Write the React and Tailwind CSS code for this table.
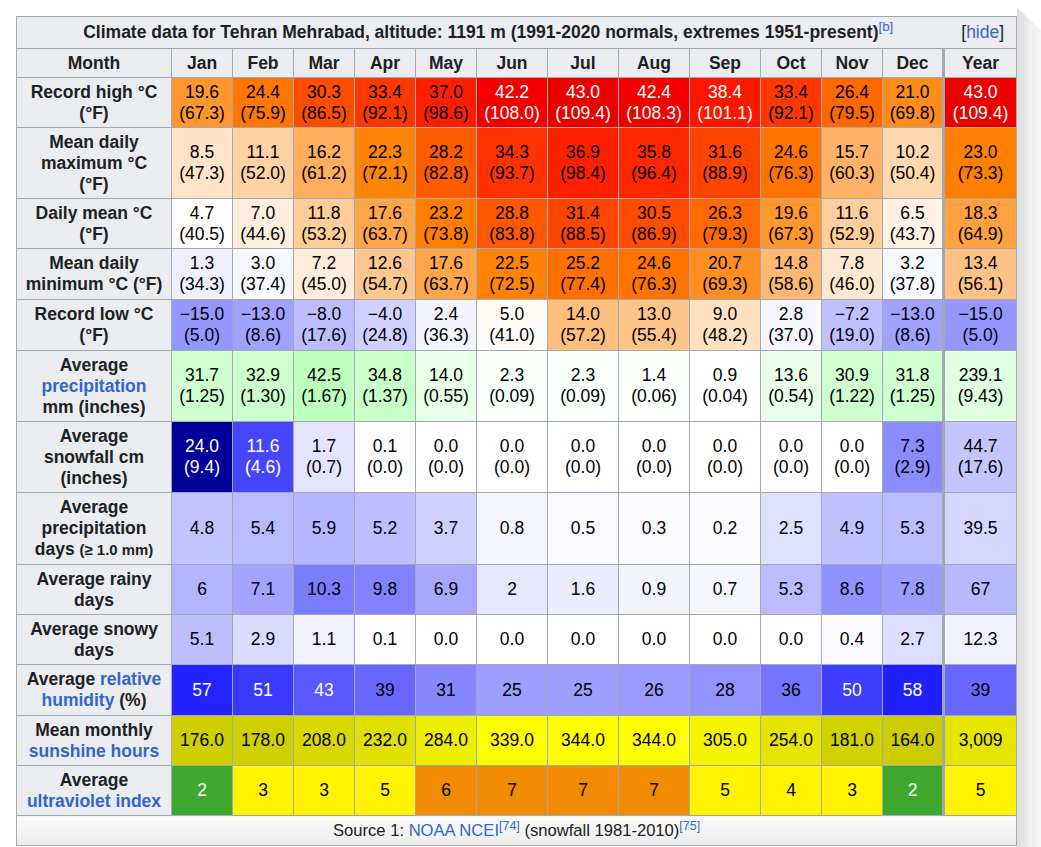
import React from "react";

const MONTHS = ["Jan", "Feb", "Mar", "Apr", "May", "Jun", "Jul", "Aug", "Sep", "Oct", "Nov", "Dec"];

const clamp = (v) => Math.max(0, Math.min(255, Math.round(v)));
const rgb = ([r, g, b]) => `rgb(${clamp(r)},${clamp(g)},${clamp(b)})`;
const num = (s) => parseFloat(String(s).replace("−", "-").replace(",", ""));

// colour scales, roughly the ones the weather box template uses
function tempColor(t) {
    if (t < 4.5) {
        const k = ((t + 42.75) / 47.25) * 255;
        return [k, k, 255];
    }
    if (t < 41.5) return [255, ((41.5 - t) / 37) * 255, t < 23 ? ((23 - t) / 18.5) * 255 : 0];
    return [((60 - t) / 18.5) * 255, 0, 0];
}
const precipColor = (v) => {
    const k = 255 * (1 - v / 165);
    return [k, 255, k];
};
const snowColor = (v) => {
    if (v <= 16) {
        const k = 255 * (1 - v / 16);
        return [k, k, 255];
    }
    return [0, 0, 255 * (1 - (v - 16) / 20)];
};
const daysColor = (d) => {
    const k = 255 * (1 - d / 20);
    return [k, k, 255];
};
const humidColor = (h) => {
    const k = 255 * (1 - h / 66);
    return [k, k, 255];
};
const sunColor = (h) => {
    const k = 204 + (h - 164) * 0.2833;
    return [k, k, 0];
};
const uvColor = (u) => (u <= 2 ? [62, 167, 45] : u <= 5 ? [255, 243, 0] : u <= 7 ? [241, 139, 0] : [229, 50, 16]);

const KINDS = {
    temp: { color: tempColor, yearDiv: 1, white: (v) => v >= 38 },
    precip: { color: precipColor, yearDiv: 12, white: () => false },
    snow: { color: snowColor, yearDiv: 12, white: (v) => v >= 10 },
    days: { color: daysColor, yearDiv: 12, white: () => false },
    humid: { color: humidColor, yearDiv: 1, white: (v) => v >= 42 },
    sun: { color: sunColor, yearDiv: 12, white: () => false },
    uv: { color: uvColor, yearDiv: 1, white: (v) => v <= 2 },
};

const Link = ({ children }) => <span className="text-[#3366cc]">{children}</span>;

const ROWS = [
    {
        h: "h-[50px]",
        label: <>Record high °C<br />(°F)</>,
        kind: "temp",
        data: [["19.6", "67.3"], ["24.4", "75.9"], ["30.3", "86.5"], ["33.4", "92.1"], ["37.0", "98.6"], ["42.2", "108.0"], ["43.0", "109.4"], ["42.4", "108.3"], ["38.4", "101.1"], ["33.4", "92.1"], ["26.4", "79.5"], ["21.0", "69.8"], ["43.0", "109.4"]],
    },
    {
        h: "h-[71px]",
        label: <>Mean daily<br />maximum °C<br />(°F)</>,
        kind: "temp",
        data: [["8.5", "47.3"], ["11.1", "52.0"], ["16.2", "61.2"], ["22.3", "72.1"], ["28.2", "82.8"], ["34.3", "93.7"], ["36.9", "98.4"], ["35.8", "96.4"], ["31.6", "88.9"], ["24.6", "76.3"], ["15.7", "60.3"], ["10.2", "50.4"], ["23.0", "73.3"]],
    },
    {
        h: "h-[50px]",
        label: <>Daily mean °C<br />(°F)</>,
        kind: "temp",
        data: [["4.7", "40.5"], ["7.0", "44.6"], ["11.8", "53.2"], ["17.6", "63.7"], ["23.2", "73.8"], ["28.8", "83.8"], ["31.4", "88.5"], ["30.5", "86.9"], ["26.3", "79.3"], ["19.6", "67.3"], ["11.6", "52.9"], ["6.5", "43.7"], ["18.3", "64.9"]],
    },
    {
        h: "h-[51px]",
        label: <>Mean daily<br />minimum °C (°F)</>,
        kind: "temp",
        data: [["1.3", "34.3"], ["3.0", "37.4"], ["7.2", "45.0"], ["12.6", "54.7"], ["17.6", "63.7"], ["22.5", "72.5"], ["25.2", "77.4"], ["24.6", "76.3"], ["20.7", "69.3"], ["14.8", "58.6"], ["7.8", "46.0"], ["3.2", "37.8"], ["13.4", "56.1"]],
    },
    {
        h: "h-[51px]",
        label: <>Record low °C<br />(°F)</>,
        kind: "temp",
        data: [["−15.0", "5.0"], ["−13.0", "8.6"], ["−8.0", "17.6"], ["−4.0", "24.8"], ["2.4", "36.3"], ["5.0", "41.0"], ["14.0", "57.2"], ["13.0", "55.4"], ["9.0", "48.2"], ["2.8", "37.0"], ["−7.2", "19.0"], ["−13.0", "8.6"], ["−15.0", "5.0"]],
    },
    {
        h: "h-[71px]",
        label: <>Average<br /><Link>precipitation</Link><br />mm (inches)</>,
        kind: "precip",
        data: [["31.7", "1.25"], ["32.9", "1.30"], ["42.5", "1.67"], ["34.8", "1.37"], ["14.0", "0.55"], ["2.3", "0.09"], ["2.3", "0.09"], ["1.4", "0.06"], ["0.9", "0.04"], ["13.6", "0.54"], ["30.9", "1.22"], ["31.8", "1.25"], ["239.1", "9.43"]],
    },
    {
        h: "h-[71px]",
        label: <>Average<br />snowfall cm<br />(inches)</>,
        kind: "snow",
        data: [["24.0", "9.4"], ["11.6", "4.6"], ["1.7", "0.7"], ["0.1", "0.0"], ["0.0", "0.0"], ["0.0", "0.0"], ["0.0", "0.0"], ["0.0", "0.0"], ["0.0", "0.0"], ["0.0", "0.0"], ["0.0", "0.0"], ["7.3", "2.9"], ["44.7", "17.6"]],
    },
    {
        h: "h-[72px]",
        label: <>Average<br />precipitation<br />days <span className="text-[14.9px] leading-[14px]">(≥ 1.0 mm)</span></>,
        kind: "days",
        data: ["4.8", "5.4", "5.9", "5.2", "3.7", "0.8", "0.5", "0.3", "0.2", "2.5", "4.9", "5.3", "39.5"],
    },
    {
        h: "h-[50px]",
        label: <>Average rainy<br />days</>,
        kind: "days",
        data: ["6", "7.1", "10.3", "9.8", "6.9", "2", "1.6", "0.9", "0.7", "5.3", "8.6", "7.8", "67"],
    },
    {
        h: "h-[50px]",
        label: <>Average snowy<br />days</>,
        kind: "days",
        data: ["5.1", "2.9", "1.1", "0.1", "0.0", "0.0", "0.0", "0.0", "0.0", "0.0", "0.4", "2.7", "12.3"],
    },
    {
        h: "h-[51px]",
        label: <>Average <Link>relative</Link><br /><Link>humidity</Link> (%)</>,
        kind: "humid",
        data: ["57", "51", "43", "39", "31", "25", "25", "26", "28", "36", "50", "58", "39"],
    },
    {
        h: "h-[50px]",
        label: <>Mean monthly<br /><Link>sunshine hours</Link></>,
        kind: "sun",
        data: ["176.0", "178.0", "208.0", "232.0", "284.0", "339.0", "344.0", "344.0", "305.0", "254.0", "181.0", "164.0", "3,009"],
    },
    {
        h: "h-[50px]",
        label: <>Average<br /><Link>ultraviolet index</Link></>,
        kind: "uv",
        data: ["2", "3", "3", "5", "6", "7", "7", "7", "5", "4", "3", "2", "5"],
    },
];

const COL_WIDTHS = [155, 61, 61, 61, 61, 61, 71, 71, 71, 71, 61, 61, 61, 73];

function DataCell({ value, kind, isYear }) {
    const k = KINDS[kind];
    const main = Array.isArray(value) ? value[0] : value;
    const v = num(main) / (isYear ? k.yearDiv : 1);
    const white = k.white(v);
    return (
        <td
            className={`border border-[#a2a9b1] py-0 px-0 text-center align-middle ${isYear ? "border-l-[3px]" : ""} ${white ? "text-white" : "text-black"}`}
            style={{ backgroundColor: rgb(k.color(v)) }}
        >
            {main}
            {Array.isArray(value) && (
                <>
                    <br />({value[1]})
                </>
            )}
        </td>
    );
}

export default function App() {
    return (
        <div className="flex w-[1041px] h-[847px] overflow-hidden bg-white font-['Liberation_Sans',Arial,sans-serif] text-[17.5px] leading-[21px] text-[#202122]">
            <div className="pl-4 pt-4">
                <table className="table-fixed border-collapse w-[1000px] border border-[#a2a9b1]">
                    <colgroup>
                        {COL_WIDTHS.map((w, i) => (
                            <col key={i} style={{ width: w }} />
                        ))}
                    </colgroup>
                    <thead>
                        <tr className="h-[32px]">
                            <th colSpan={14} className="border border-[#a2a9b1] bg-[#eaecf0] px-0 py-0">
                                <div className="flex items-center pl-[6px] pr-[12px]">
                                    <span className="flex-1 text-center font-bold">
                                        Climate data for Tehran Mehrabad, altitude: 1191 m (1991-2020 normals, extremes 1951-present)
                                        <sup className="font-normal text-[#3366cc]">[b]</sup>
                                    </span>
                                    <span className="ml-2 font-normal">
                                        [<Link>hide</Link>]
                                    </span>
                                </div>
                            </th>
                        </tr>
                        <tr className="h-[29px]">
                            <th className="border border-[#a2a9b1] bg-[#eaecf0] py-0 font-bold">Month</th>
                            {MONTHS.map((m) => (
                                <th key={m} className="border border-[#a2a9b1] bg-[#eaecf0] py-0 font-bold">
                                    {m}
                                </th>
                            ))}
                            <th className="border border-[#a2a9b1] border-l-[3px] bg-[#eaecf0] py-0 font-bold">Year</th>
                        </tr>
                    </thead>
                    <tbody>
                        {ROWS.map((row, ri) => (
                            <tr key={ri} className={row.h}>
                                <th className="border border-[#a2a9b1] bg-[#eaecf0] py-0 px-[2px] font-bold text-center">
                                    {row.label}
                                </th>
                                {row.data.map((val, ci) => (
                                    <DataCell key={ci} value={val} kind={row.kind} isYear={ci === 12} />
                                ))}
                            </tr>
                        ))}
                        <tr className="h-[30px]">
                            <td colSpan={14} className="border border-[#a2a9b1] bg-gradient-to-b from-[#fbfbfb] to-[#ececec] py-0 text-center text-[16.6px]">
                                Source 1: <Link>NOAA NCEI</Link>
                                <sup className="text-[#3366cc]">[74]</sup> (snowfall 1981-2010)
                                <sup className="text-[#3366cc]">[75]</sup>
                            </td>
                        </tr>
                    </tbody>
                </table>
            </div>
            <div className="flex-1 mt-[8px] bg-gradient-to-r from-[#dadada] via-[#eeeeee] to-[#f8f8f8] [clip-path:polygon(0_0,100%_22px,100%_100%,0_100%)]" />
        </div>
    );
}
